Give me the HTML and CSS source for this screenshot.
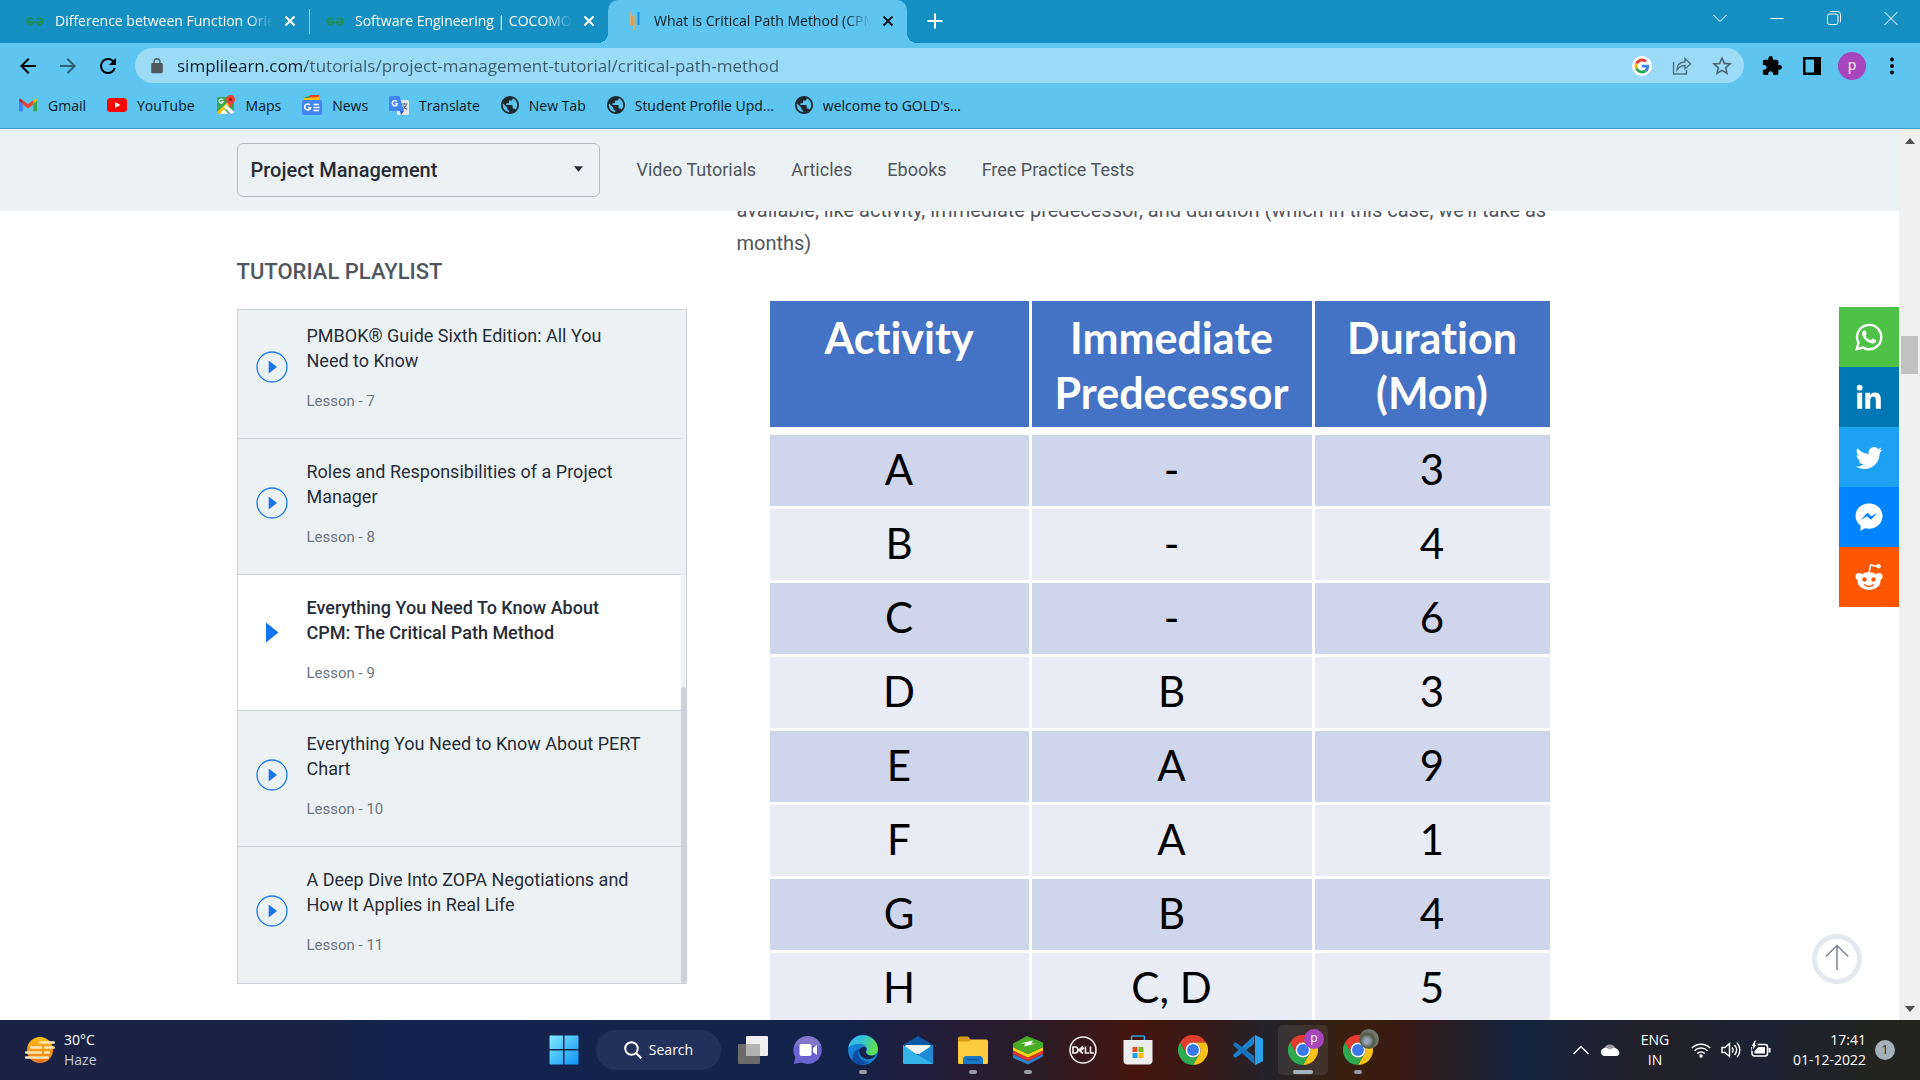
FILE: index.html
```html
<!DOCTYPE html>
<html lang="en">
<head>
<meta charset="utf-8">
<title>What is Critical Path Method (CPM)</title>
<link rel="stylesheet" href="styles.css">
</head>
<body>
<svg class="defs" aria-hidden="true">
  <symbol id="chrome" viewBox="0 0 48 48">
    <path fill="#e33b2e" d="M3.2 12A24 24 0 0 1 44.8 12H24A12 12 0 0 0 13.6 30Z"/>
    <path fill="#fbc116" d="M44.8 12A24 24 0 0 1 24 48L34.4 30A12 12 0 0 0 24 12Z"/>
    <path fill="#2da94f" d="M24 48A24 24 0 0 1 3.2 12L13.6 30A12 12 0 0 0 34.4 30Z"/>
    <circle cx="24" cy="24" r="12" fill="#fff"/><circle cx="24" cy="24" r="9.5" fill="#3b78e7"/>
  </symbol>
  <symbol id="globe" viewBox="2 2 20 20">
    <path fill="#1f2a30" d="M12 2C6.48 2 2 6.48 2 12s4.48 10 10 10 10-4.48 10-10S17.52 2 12 2zm-1 17.93c-3.95-.49-7-3.85-7-7.93 0-.62.08-1.21.21-1.79L9 15v1c0 1.1.9 2 2 2v1.93zm6.9-2.54c-.26-.81-1-1.39-1.9-1.39h-1v-3c0-.55-.45-1-1-1H8v-2h2c.55 0 1-.45 1-1V7h2c1.1 0 2-.9 2-2v-.41c2.93 1.19 5 4.06 5 7.41 0 2.08-.8 3.97-2.1 5.39z"/>
  </symbol>
  <symbol id="play" viewBox="0 0 32 32">
    <circle cx="16" cy="16" r="15" fill="none" stroke="#1b75ec" stroke-width="1.3"/><path fill="#1b75ec" d="M12.700 9.500L21 16L12.700 22.500Z"/>
  </symbol>
  <symbol id="gfg" viewBox="0 0 20 20">
    <path fill="none" stroke="#1f8f5c" stroke-width="2" d="M8 8.500A3.200 3.200 0 1 0 8.600 11H2M12 8.500A3.200 3.200 0 1 1 11.400 11H18"/>
  </symbol>
  <symbol id="close" viewBox="0 0 12 12"><path fill="none" stroke="currentColor" stroke-width="2" d="M1.500 1.500l9 9M10.500 1.500l-9 9"/></symbol>
</svg>

<header class="browser">
  <div class="tabstrip">
    <div class="tab">
      <svg class="i20"><use href="#gfg"/></svg>
      <span class="tab-title">Difference between Function Oriented</span>
      <button class="tab-close" aria-label="Close tab"><svg><use href="#close"/></svg></button>
    </div>
    <div class="tab split">
      <svg class="i20"><use href="#gfg"/></svg>
      <span class="tab-title">Software Engineering | COCOMO Model</span>
      <button class="tab-close" aria-label="Close tab"><svg><use href="#close"/></svg></button>
    </div>
    <div class="tab active">
      <svg class="i20" viewBox="0 0 20 20"><path stroke="#d8b16a" stroke-width="1.500" d="M6.500 1v13M10 4v15" /><path stroke="#c9a45f" stroke-width="1.500" d="M8.300 5v10M11.500 8v6"/><path stroke="#1b94e8" stroke-width="2" d="M14.500 1v13"/></svg>
      <span class="tab-title">What is Critical Path Method (CPM)</span>
      <button class="tab-close" aria-label="Close tab"><svg><use href="#close"/></svg></button>
    </div>
    <button class="newtab" aria-label="New tab"><svg class="i16" viewBox="0 0 16 16"><path stroke="#fff" stroke-width="2" d="M8 .5v15M.5 8h15"/></svg></button>
    <div class="window-controls">
      <button aria-label="Search tabs"><svg class="i16" viewBox="0 0 16 16"><path d="M1.500 5L8 11.500L14.500 5"/></svg></button>
      <button aria-label="Minimize"><svg class="i16" viewBox="0 0 16 16"><path d="M1.500 8.500h13"/></svg></button>
      <button aria-label="Restore"><svg class="i16" viewBox="0 0 16 16"><rect x="1.500" y="4" width="10.500" height="10.500" rx="2"/><path d="M4 1.500h7.500a3 3 0 0 1 3 3V12"/></svg></button>
      <button aria-label="Close"><svg class="i16" viewBox="0 0 16 16"><path d="M1.500 2l13 13M14.500 2l-13 13"/></svg></button>
    </div>
  </div>
  <div class="toolbar">
    <button class="tool" aria-label="Back"><svg class="i24" viewBox="0 0 24 24"><path d="M20 11H7.830l5.590-5.590L12 4l-8 8 8 8 1.410-1.410L7.830 13H20v-2z"/></svg></button>
    <button class="tool dim" aria-label="Forward"><svg class="i24" viewBox="0 0 24 24"><path d="M4 11h12.170l-5.590-5.590L12 4l8 8-8 8-1.410-1.410L16.170 13H4v-2z"/></svg></button>
    <button class="tool" aria-label="Reload"><svg class="i24" viewBox="0 0 24 24"><path d="M17.650 6.350A7.958 7.958 0 0 0 12 4a8 8 0 1 0 7.730 10h-2.080A6 6 0 1 1 12 6c1.660 0 3.140.69 4.220 1.780L13 11h7V4l-2.350 2.350z"/></svg></button>
    <div class="omnibox">
      <svg class="i16" viewBox="1 1 22 22"><path fill="#50585f" d="M18 8h-1V6c0-2.760-2.240-5-5-5S7 3.240 7 6v2H6c-1.100 0-2 .9-2 2v10c0 1.100.9 2 2 2h12c1.100 0 2-.9 2-2V10c0-1.100-.9-2-2-2zM9 6c0-1.660 1.340-3 3-3s3 1.340 3 3v2H9z"/></svg>
      <input class="url" type="text" aria-label="Address" value="simplilearn.com/tutorials/project-management-tutorial/critical-path-method">
      <button class="tool" aria-label="Search with Google"><svg class="i20" viewBox="-8 -8 64 64"><circle cx="24" cy="24" r="32" fill="#fff"/><path fill="#EA4335" d="M24 9.500c3.540 0 6.710 1.220 9.210 3.600l6.850-6.850C35.900 2.380 30.470 0 24 0 14.620 0 6.510 5.380 2.560 13.220l7.980 6.190C12.430 13.720 17.740 9.500 24 9.500z"/><path fill="#4285F4" d="M46.980 24.550c0-1.570-.15-3.090-.38-4.550H24v9.020h12.940c-.58 2.960-2.260 5.480-4.780 7.180l7.730 6c4.510-4.180 7.090-10.360 7.090-17.650z"/><path fill="#FBBC05" d="M10.530 28.590c-.48-1.450-.76-2.990-.76-4.590s.27-3.140.76-4.590l-7.980-6.190C.92 16.460 0 20.120 0 24c0 3.880.92 7.540 2.560 10.780l7.970-6.190z"/><path fill="#34A853" d="M24 48c6.480 0 11.930-2.130 15.890-5.810l-7.730-6c-2.150 1.450-4.920 2.300-8.160 2.300-6.260 0-11.570-4.220-13.470-9.910l-7.980 6.190C6.510 42.620 14.620 48 24 48z"/></svg></button>
      <button class="tool" aria-label="Share"><svg class="i20" viewBox="0 0 20 20"><g fill="none" stroke="#4f7183" stroke-width="1.400"><path d="M1.500 6v12h13v-4"/><path d="M5 14c0-5 3-8 8-8V2.500L18.500 8L13 12.800V9.500c-4 0-6 1.500-8 4.500z"/></g></svg></button>
      <button class="tool" aria-label="Bookmark"><svg class="i20" viewBox="2 2 20 20"><path fill="#4b6573" d="M22 9.240l-7.190-.62L12 2 9.190 8.630 2 9.240l5.460 4.730L5.820 21 12 17.270 18.180 21l-1.630-7.030L22 9.240zM12 15.400l-3.760 2.270 1-4.280-3.320-2.880 4.380-.38L12 6.100l1.710 4.040 4.380.38-3.320 2.880 1 4.280L12 15.400z"/></svg></button>
    </div>
    <div class="actions">
      <button class="tool" aria-label="Extensions"><svg class="i20" viewBox="1 1 22 22"><path d="M20.500 11H19V7c0-1.100-.9-2-2-2h-4V3.500C13 2.120 11.880 1 10.500 1S8 2.120 8 3.500V5H4c-1.100 0-1.990.9-1.990 2v3.800H3.500c1.490 0 2.700 1.210 2.700 2.700s-1.210 2.700-2.700 2.700H2V20c0 1.100.9 2 2 2h3.800v-1.500c0-1.490 1.210-2.700 2.700-2.700 1.490 0 2.700 1.210 2.700 2.700V22H17c1.100 0 2-.9 2-2v-4h1.500c1.380 0 2.500-1.120 2.500-2.500S21.880 11 20.500 11z"/></svg></button>
      <button class="tool" aria-label="Side panel"><svg class="i20" viewBox="0 0 20 20"><path fill-rule="evenodd" d="M1 1h18v18H1zM3.500 3.500v13H12v-13z"/></svg></button>
      <button class="tool avatar" aria-label="Profile">p</button>
      <button class="tool" aria-label="Menu"><svg class="i20" viewBox="0 0 20 20"><circle cx="10" cy="3.500" r="2"/><circle cx="10" cy="10" r="2"/><circle cx="10" cy="16.500" r="2"/></svg></button>
    </div>
  </div>
  <nav class="bookmarks" aria-label="Bookmarks">
    <a href="#"><svg class="i20" viewBox="0 0 20 20"><path fill="#4285f4" d="M1 5v11.500h3.800V8z"/><path fill="#34a853" d="M19 5v11.500h-3.800V8z"/><path fill="#fbbc04" d="M15.200 5.500L17 4c1-.6 2 0 2 1.500L15.200 9z"/><path fill="#c5221f" d="M4.800 5.500L3 4C2 3.400 1 4 1 5.500L4.800 9z"/><path fill="#ea4335" d="M4.800 5.300L10 9.300l5.200-4V9.500L10 13.500L4.800 9.500z"/></svg>Gmail</a>
    <a href="#"><svg class="i20" viewBox="0 0 20 20"><rect y="3" width="20" height="14" rx="3.500" fill="#f00"/><path fill="#fff" d="M8 7l5.500 3L8 13z"/></svg>YouTube</a>
    <a href="#"><svg class="i20" viewBox="0 0 20 20"><rect x="1" y="2" width="17" height="17" rx="2" fill="#34a853"/><path fill="#4285f4" d="M11 11l7 5.500V17a2 2 0 0 1-2 2h-3z"/><path fill="#fbbc04" d="M1 17L16 3l2 2.500L4 19H3a2 2 0 0 1-2-2z"/><path fill="#fff" d="M10 9.500l8 7V18L15 19 8 12zM4 19l4-5 5 5z"/><path fill="#e94335" d="M14.500 0a4.500 4.500 0 0 0-4.500 4.500c0 3 3.500 4.500 4.500 8.500 1-4 4.500-5.500 4.500-8.500A4.500 4.500 0 0 0 14.500 0z"/><circle cx="14.500" cy="4.500" r="1.600" fill="#861b14"/><path fill="none" stroke="#fff" stroke-width="1.200" d="M6.800 4.800a2 2 0 1 0 .4 1.700H5.500"/></svg>Maps</a>
    <a href="#"><svg class="i20" viewBox="0 0 20 20"><path fill="#0c9d58" d="M3 2l9-2 1 5H3z"/><path fill="#ea4335" d="M8 0h9v5H7z"/><path fill="#fbbc04" d="M2 3l15-1v4H2z"/><rect y="5" width="20" height="15" rx="1.500" fill="#4285f4"/><path fill="none" stroke="#fff" stroke-width="1.600" d="M8 10a3 3 0 1 0 .6 2.800H6M11.500 9.500H17M11.500 12.500h6M11.500 15.500H17"/></svg>News</a>
    <a href="#"><svg class="i20" viewBox="0 0 20 20"><rect x="8" y="5" width="12" height="15" rx="1.500" fill="#e3e8ee"/><path fill="#4285f4" d="M1.500 1h9L15 16H1.500A1.500 1.500 0 0 1 0 14.500v-12A1.500 1.500 0 0 1 1.500 1z"/><path fill="#3058a8" d="M11 16h4l-3 4z"/><path fill="none" stroke="#fff" stroke-width="1.400" d="M7.800 6.500a2.600 2.600 0 1 0 .6 2.200H6"/><path fill="none" stroke="#5c6b7a" stroke-width="1.100" d="M13 9h5.500M15.700 8v1M17.500 9c-.5 3-2 4-3 5M14.500 10.500c.7 2 2.500 3.500 3.500 4"/></svg>Translate</a>
    <a href="#"><svg class="i18"><use href="#globe"/></svg>New Tab</a>
    <a href="#"><svg class="i18"><use href="#globe"/></svg>Student Profile Upd...</a>
    <a href="#"><svg class="i18"><use href="#globe"/></svg>welcome to GOLD's...</a>
  </nav>
</header>

<div class="viewport">
  <div class="site">
    <header class="site-nav">
      <div class="container nav-row">
        <div class="topic">
          <select aria-label="Topic"><option>Project Management</option></select>
          <svg class="caret" viewBox="0 0 8 5"><path fill="#272c37" d="M0 0h8L4 5z"/></svg>
        </div>
        <nav class="links"><a href="#">Video Tutorials</a><a href="#">Articles</a><a href="#">Ebooks</a><a href="#">Free Practice Tests</a></nav>
      </div>
    </header>
    <main class="content">
      <div class="container columns">
        <aside class="playlist">
          <h2>TUTORIAL PLAYLIST</h2>
          <div class="scroller">
            <ul>
              <li><svg class="play"><use href="#play"/></svg><a href="#">PMBOK® Guide Sixth Edition: All You Need to Know</a><small>Lesson - 7</small></li>
              <li><svg class="play"><use href="#play"/></svg><a href="#">Roles and Responsibilities of a Project Manager</a><small>Lesson - 8</small></li>
              <li class="current"><svg class="play" viewBox="0 0 32 32"><path fill="#1274f0" d="M10 6.500L22.500 16.500L10 26.500Z"/></svg><a href="#">Everything You Need To Know About CPM: The Critical Path Method</a><small>Lesson - 9</small></li>
              <li><svg class="play"><use href="#play"/></svg><a href="#">Everything You Need to Know About PERT Chart</a><small>Lesson - 10</small></li>
              <li><svg class="play"><use href="#play"/></svg><a href="#">A Deep Dive Into ZOPA Negotiations and How It Applies in Real Life</a><small>Lesson - 11</small></li>
            </ul>
            <div class="track"><div class="thumb"></div></div>
          </div>
        </aside>
        <article>
          <p>available, like activity, immediate predecessor, and duration (which in this case, we'll take as months)</p>
          <table>
            <colgroup><col class="c-act"><col class="c-pre"><col class="c-dur"></colgroup>
            <thead><tr><th>Activity</th><th>Immediate Predecessor</th><th>Duration (Mon)</th></tr></thead>
            <tbody>
              <tr><td>A</td><td>-</td><td>3</td></tr>
              <tr><td>B</td><td>-</td><td>4</td></tr>
              <tr><td>C</td><td>-</td><td>6</td></tr>
              <tr><td>D</td><td>B</td><td>3</td></tr>
              <tr><td>E</td><td>A</td><td>9</td></tr>
              <tr><td>F</td><td>A</td><td>1</td></tr>
              <tr><td>G</td><td>B</td><td>4</td></tr>
              <tr><td>H</td><td>C, D</td><td>5</td></tr>
            </tbody>
          </table>
        </article>
      </div>
    </main>
    <div class="share">
      <a class="wa" href="#" aria-label="WhatsApp"><svg class="i28" viewBox="0 0 24 24"><path fill="none" stroke="#fff" stroke-width="2" d="M1.500 22.500L3 17A10.400 10.400 0 1 1 7 21.100Z"/><path d="M17.472 14.382c-.297-.149-1.758-.867-2.030-.967-.273-.099-.471-.148-.67.15-.197.297-.767.966-.94 1.164-.173.199-.347.223-.644.075-.297-.15-1.255-.463-2.390-1.475-.883-.788-1.480-1.761-1.653-2.059-.173-.297-.018-.458.13-.606.134-.133.298-.347.446-.52.149-.174.198-.298.298-.497.099-.198.05-.371-.025-.52-.075-.149-.669-1.612-.916-2.207-.242-.579-.487-.5-.669-.51-.173-.008-.371-.01-.57-.01-.198 0-.52.074-.792.372-.272.297-1.040 1.016-1.040 2.479 0 1.462 1.065 2.875 1.213 3.074.149.198 2.096 3.200 5.077 4.487.709.306 1.262.489 1.694.625.712.227 1.360.195 1.871.118.571-.085 1.758-.719 2.006-1.413.248-.694.248-1.289.173-1.413-.074-.124-.272-.198-.57-.347"/></svg></a>
      <a class="li" href="#" aria-label="LinkedIn"><svg class="i28" viewBox="2 2 20 20"><path d="M20.447 20.452h-3.554v-5.569c0-1.328-.027-3.037-1.852-3.037-1.853 0-2.136 1.445-2.136 2.939v5.667H9.351V9h3.414v1.561h.046c.477-.9 1.637-1.850 3.370-1.850 3.601 0 4.267 2.370 4.267 5.455v6.286zM5.337 7.433a2.062 2.062 0 1 1 0-4.125 2.062 2.062 0 0 1 0 4.125zM7.119 20.452H3.554V9h3.565v11.452z"/></svg></a>
      <a class="tw" href="#" aria-label="Twitter"><svg class="i28" viewBox="-.5 -1.500 25 25"><path d="M23.953 4.570a10 10 0 01-2.825.775 4.958 4.958 0 002.163-2.723c-.951.555-2.005.959-3.127 1.184a4.920 4.920 0 00-8.384 4.482C7.690 8.095 4.067 6.130 1.640 3.162a4.822 4.822 0 00-.666 2.475c0 1.710.87 3.213 2.188 4.096a4.904 4.904 0 01-2.228-.616v.06a4.923 4.923 0 003.946 4.827 4.996 4.996 0 01-2.212.085 4.936 4.936 0 004.604 3.417 9.867 9.867 0 01-6.102 2.105c-.39 0-.779-.023-1.170-.067a13.995 13.995 0 007.557 2.209c9.053 0 13.998-7.496 13.998-13.985 0-.21 0-.42-.015-.63A9.935 9.935 0 0024 4.590z"/></svg></a>
      <a class="ms" href="#" aria-label="Messenger"><svg class="i28" viewBox="0 0 28 28"><path d="M14 .5C6.300.5.500 6 .500 13c0 4 2 7.300 5 9.500V28l4.500-2.700c1.300.3 2.600.5 4 .5 7.700 0 13.500-5.500 13.500-12.700S21.700.5 14 .5z"/><path fill="#0084ff" d="M5.800 16.800L12.300 9.800L16.300 13.300L22.500 9.800L16 16.800L12 13.300z"/></svg></a>
      <a class="rd" href="#" aria-label="Reddit"><svg class="i28" viewBox="0 0 28 28"><path fill="none" stroke="#fff" stroke-width="1.500" d="M14 10l1.600-8 7 1.500"/><circle cx="23.500" cy="3.300" r="2.300"/><circle cx="4" cy="13.500" r="3.500"/><circle cx="24" cy="13.500" r="3.500"/><ellipse cx="14" cy="18" rx="11.500" ry="9"/><circle cx="9.500" cy="16.500" r="2.200" fill="#ff5700"/><circle cx="18.500" cy="16.500" r="2.200" fill="#ff5700"/><path fill="none" stroke="#ff5700" stroke-width="1.400" d="M9 21.500c3 2.300 7 2.300 10 0"/></svg></a>
    </div>
    <button class="totop" aria-label="Back to top"><svg viewBox="0 0 24 26"><path fill="none" stroke="#7d8299" stroke-width="1.500" d="M12 26V1.500M.8 12.500L12 1.500l11.200 11"/></svg></button>
  </div>
  <div class="scrollbar">
    <svg viewBox="0 0 10 6"><path fill="#505050" d="M0 6h10L5 0z"/></svg>
    <div class="handle"></div>
    <svg viewBox="0 0 10 6"><path fill="#505050" d="M0 0h10L5 6z"/></svg>
  </div>
</div>

<footer class="taskbar">
  <button class="weather">
    <svg class="i30" viewBox="0 0 30 30"><defs><linearGradient id="sun" x1="0" y1="0" x2="0" y2="1"><stop offset="0" stop-color="#fbbd12"/><stop offset="1" stop-color="#e8761b"/></linearGradient></defs><circle cx="15" cy="15" r="13" fill="url(#sun)"/><path stroke="#fde6b4" stroke-width="2.400" stroke-linecap="round" d="M15 7.500h14M6 12.500h10M20 12.500h9M1 17.500h15M20 17.500h4M1 22.500h22"/></svg>
    <span>30°C<br><span class="muted">Haze</span></span>
  </button>
  <div class="apps">
    <button class="app" aria-label="Start"><svg class="i30" viewBox="0 0 30 30"><defs><linearGradient id="win" x1="0" y1="0" x2="1" y2="1"><stop offset="0" stop-color="#7fe9fd"/><stop offset="1" stop-color="#0f93f5"/></linearGradient></defs><path fill="url(#win)" d="M1.500.5H14V14H.5V1.500a1 1 0 0 1 1-1zM15.500.5h13a1 1 0 0 1 1 1V14h-14zM.5 15.500H14v14H1.500a1 1 0 0 1-1-1zM15.500 15.500h14v13a1 1 0 0 1-1 1h-13z"/></svg></button>
    <button class="search"><svg class="i18" viewBox="0 0 18 18"><circle cx="7.500" cy="7.500" r="6.300" fill="none" stroke="#fff" stroke-width="2"/><path stroke="#fff" stroke-width="2" d="M12 12l5.300 5.300"/></svg>Search</button>
    <button class="app" aria-label="Task view"><svg class="i30" viewBox="0 0 30 30"><rect y="9" width="22" height="20" rx="1" fill="#6c6a6b"/><rect x="8" y="1" width="22" height="20" rx="1" fill="#eeeeef"/><path fill="#b4b3b4" d="M8 9h14v12H8z"/></svg></button>
    <button class="app" aria-label="Chat"><svg class="i30" viewBox="0 0 30 30"><path fill="#6a63cf" d="M15 1a14 14 0 1 1-6.500 26.500L.8 29l1.500-7A14 14 0 0 1 15 1z"/><path fill="#8d7fc6" d="M15 1a14 14 0 0 1 13.500 10H1.700A14 14 0 0 1 15 1z" opacity=".7"/><rect x="6.500" y="9" width="12" height="12" rx="2" fill="#fff"/><path fill="#fff" d="M20 13l4-3v10l-4-3z"/></svg></button>
    <button class="app running" aria-label="Edge"><svg class="i30" viewBox="0 0 30 30"><defs><linearGradient id="edg" x1="0" y1="0" x2="1" y2=".3"><stop offset="0" stop-color="#35b8e8"/><stop offset=".5" stop-color="#35c1d6"/><stop offset="1" stop-color="#5fe052"/></linearGradient></defs><circle cx="15" cy="15" r="15" fill="#1580d4"/><path fill="url(#edg)" d="M.2 13A15 15 0 0 1 30 14c0 4-3 6.500-6.500 6.500s-5.500-1.500-5.500-3 1-1.500 1-3.500c0-3-3.500-5-7.500-5C6 9 2 10.500.2 13z"/><path fill="#0c4da2" d="M11 14c-3 6 2 14 11 12.500-5 4-13 4.500-17-.5-1.500-5 1-10.500 6-12z"/><path fill="#14244c" d="M18 17.500c-1-1 1-2 .5-4-2-3-7-1-7.500 2-.5 5 5 9.500 11 8.500 3-.8 5-2.500 6-4.500-3 2-8 1.500-10-2z"/></svg></button>
    <button class="app" aria-label="Mail"><svg class="i30" viewBox="0 0 30 30"><path fill="#0c59a8" d="M0 10L15 1l15 9v5H0z"/><path fill="#f2f4f6" d="M2.500 10h25v9h-25z"/><path fill="#33b3e8" d="M0 10l15 10 15-10v18a1 1 0 0 1-1 1H1a1 1 0 0 1-1-1z"/><path fill="#1c8ad6" d="M30 29L15 20 30 10z"/></svg></button>
    <button class="app running" aria-label="File Explorer"><svg class="i30" viewBox="0 0 30 30"><path fill="#d79a12" d="M0 3a1.500 1.500 0 0 1 1.500-1.500H10L13 5v5H0z"/><path fill="#fdcb3d" d="M0 6.500h10L13 4.500h15.500A1.500 1.500 0 0 1 30 6v22a1 1 0 0 1-1 1H1a1 1 0 0 1-1-1z"/><path fill="#1879c4" d="M5 29v-4.500A3.500 3.500 0 0 1 8.500 21h13a3.500 3.500 0 0 1 3.500 3.500V29z"/><path stroke="#0d569b" stroke-width="1.500" d="M9 24.500h12"/></svg></button>
    <button class="app running" aria-label="BlueStacks"><svg class="i30" viewBox="0 0 30 30"><path fill="#2782c8" d="M0 19l15 7 15-7v2.500L15 29.500 0 23z"/><path fill="#e43131" d="M0 15.500l15 7 15-7V19l-15 7L0 19z"/><path fill="#fbd416" d="M0 12l15 7 15-7v3.500l-15 7-15-7z"/><path fill="#48ad26" d="M0 8.500L14 1l16 6.500V12l-15 7L0 12z"/><path fill="#fff" d="M7 8.500l13-3-2 3h5L11 11.500l1.500-3z"/></svg></button>
    <button class="app" aria-label="Dell"><svg class="i30" viewBox="0 0 30 30"><circle cx="15" cy="15" r="13" fill="none" stroke="#f1eceb" stroke-width="1.600"/><path fill="none" stroke="#f1eceb" stroke-width="1.700" d="M5 12h2a3 3 0 0 1 0 6H5zM15 11.500l-4 3.500 4 3.500M11.500 16l4.500-3M17.500 11.500V18H21M22.500 11.500V18h3.500"/></svg></button>
    <button class="app" aria-label="Microsoft Store"><svg class="i30" viewBox="0 0 30 30"><path fill="none" stroke="#31a5de" stroke-width="1.600" d="M8.500 7V2a1 1 0 0 1 1-1h11a1 1 0 0 1 1 1v5"/><path fill="#eceded" d="M.5 5h29v20.500a4 4 0 0 1-4 4h-21a4 4 0 0 1-4-4z"/><path fill="#e8502a" d="M9.500 12h5v5h-5z"/><path fill="#78b51b" d="M15.500 12h5v5h-5z"/><path fill="#1a9fe8" d="M9.500 18h5v5h-5z"/><path fill="#fbb813" d="M15.500 18h5v5h-5z"/></svg></button>
    <button class="app" aria-label="Chrome"><svg class="i30"><use href="#chrome"/></svg></button>
    <button class="app" aria-label="Visual Studio Code"><svg class="i30" viewBox="0 0 30 30"><path fill="#1c82cf" d="M21 9L3 22.500a1.500 1.500 0 0 1-1.500 0L.5 21a1.200 1.200 0 0 1 0-1.600L21.500.3z"/><path fill="#1673bd" d="M21 21L3 7.500a1.500 1.500 0 0 0-1.500 0L.5 9a1.200 1.200 0 0 0 0 1.600l21 19z"/><path fill="#2c9fea" d="M22 0l7 3.300a1.500 1.500 0 0 1 1 1.500v20.400a1.500 1.500 0 0 1-1 1.500L22 30z"/></svg></button>
    <button class="app running focused" aria-label="Chrome, profile p"><svg class="i30"><use href="#chrome"/></svg><span class="badge">p</span></button>
    <button class="app running" aria-label="Chrome, second profile"><svg class="i30"><use href="#chrome"/></svg><span class="badge photo"></span></button>
  </div>
  <div class="tray">
    <button aria-label="Hidden icons"><svg class="i16" viewBox="0 0 16 16"><path fill="none" stroke="#fff" stroke-width="1.500" d="M.5 12L8 4.500l7.500 7.500"/></svg></button>
    <button aria-label="OneDrive"><svg class="i20" viewBox="0 0 20 20"><path fill="#9b9ba0" d="M4 9a6 6 0 0 1 11-1.500L17 12l-13 1z"/><path fill="#fff" d="M4 16a4 4 0 0 1-1-7.500c3-1 5 0 7 1 3-2 6-2 8 .5 2 2 2 5.500-1.500 6z"/></svg></button>
    <button class="lang">ENG<br>IN</button>
    <button class="status" aria-label="Network, volume and battery">
      <svg class="i20" viewBox="0 0 20 20"><g fill="none" stroke="#fff" stroke-width="1.500"><path d="M.8 8a13 13 0 0 1 18.400 0M3.500 10.800a9.200 9.200 0 0 1 13 0M6.200 13.500a5.400 5.400 0 0 1 7.600 0"/></g><circle cx="10" cy="16" r="1.700" fill="#fff"/></svg>
      <svg class="i20" viewBox="0 0 20 20"><g fill="none" stroke="#fff" stroke-width="1.400"><path d="M1 7.500h3L8.500 3.500v13L4 12.500H1zM11 7.500a3.500 3.500 0 0 1 0 5M13.500 5a7 7 0 0 1 0 10M16 2.800a10.500 10.500 0 0 1 0 14.400"/></g></svg>
      <svg class="i20" viewBox="0 0 20 20"><rect x="1" y="4.500" width="15.500" height="11.500" rx="2.500" fill="none" stroke="#fff" stroke-width="1.500"/><path fill="#fff" d="M7.500 7H14v6.500H3.500V11zM17.500 8h2v4.500h-2z"/><path fill="#fff" stroke="#20222c" d="M3.500 0L0 6.500h2L1 11l5.500-6.500H4.200L5.500 0z"/></svg>
    </button>
    <button class="clock">17:41<br>01-12-2022</button>
    <span class="count">1</span>
  </div>
</footer>
</body>
</html>
```
FILE: styles.css
```css
* { box-sizing: border-box; }

body {
  margin: 0;
  height: 100vh;
  display: flex;
  flex-direction: column;
  overflow: hidden;
  background: #fff;
  font-family: "Open Sans", "Noto Sans", sans-serif;
  font-size: 14px;
}

button {
  display: flex;
  align-items: center;
  justify-content: center;
  padding: 0;
  border: 0;
  background: none;
  color: inherit;
  font: inherit;
}

a { color: inherit; text-decoration: none; }
svg { flex: none; display: block; }

.defs { position: absolute; width: 0; height: 0; }
.i16 { width: 16px; height: 16px; }
.i18 { width: 18px; height: 18px; }
.i20 { width: 20px; height: 20px; }
.i24 { width: 24px; height: 24px; }
.i28 { width: 28px; height: 28px; }
.i30 { width: 30px; height: 30px; }

/* Browser frame */
.browser {
  flex: none;
  background: #5ec5f0;
  border-bottom: 1px solid #4c9cc0;
}

.tabstrip {
  display: flex;
  height: 43px;
  padding-left: 9px;
  background: #168fc3;
  color: #fff;
}

.tab {
  position: relative;
  display: flex;
  align-items: center;
  gap: 10px;
  width: 300px;
  height: 43px;
  padding: 0 12px 2px 16px;
}

.tab + .tab { width: 299px; }

.split::before {
  content: "";
  position: absolute;
  left: 0;
  top: 9px;
  width: 1px;
  height: 25px;
  background: #8fd0ee;
}

.tab.active {
  border-radius: 10px 10px 0 0;
  background: #5ec5f0;
  color: #0a1a22;
}

.tab.active::before,
.tab.active::after {
  content: "";
  position: absolute;
  bottom: 0;
  width: 10px;
  height: 10px;
}

.tab.active::before {
  left: -10px;
  background: radial-gradient(circle at 0 0, transparent 10px, #5ec5f0 10px);
}

.tab.active::after {
  right: -10px;
  background: radial-gradient(circle at 100% 0, transparent 10px, #5ec5f0 10px);
}

.tab-title {
  flex: 1;
  overflow: hidden;
  white-space: nowrap;
  -webkit-mask-image: linear-gradient(90deg, #000 88%, transparent);
  mask-image: linear-gradient(90deg, #000 88%, transparent);
}

.tab-close { width: 14px; height: 14px; }
.tab-close svg { width: 12px; height: 12px; }
.newtab { width: 56px; padding-bottom: 2px; }

.window-controls {
  display: flex;
  margin-left: auto;
  padding: 0 1px 7px 0;
}

.window-controls button { width: 57px; }
.window-controls path,
.window-controls rect { fill: none; stroke: #fff; stroke-width: 1; }

.toolbar {
  display: flex;
  align-items: center;
  height: 45px;
  padding: 0 8px;
}

.tool { width: 40px; height: 36px; }
.dim { opacity: 0.5; }

.omnibox {
  flex: 1;
  display: flex;
  align-items: center;
  height: 35px;
  margin-left: 7px;
  padding: 0 2px 0 14px;
  border-radius: 18px;
  background: #9cdbf6;
}

.url {
  flex: 1;
  min-width: 0;
  margin-left: 12px;
  padding: 0;
  border: 0;
  outline: 0;
  background: linear-gradient(90deg, #0a1c26 128px, #38596a 128px);
  -webkit-background-clip: text;
  background-clip: text;
  color: transparent;
  font: 17px "Open Sans", "Noto Sans", sans-serif;
}

.actions { display: flex; align-items: center; margin-left: 8px; }

.avatar {
  width: 28px;
  height: 28px;
  margin: 0 6px;
  padding-bottom: 2px;
  border-radius: 50%;
  background: #a745bd;
  color: #fff;
}

.bookmarks {
  display: flex;
  align-items: center;
  gap: 21px;
  height: 40px;
  padding: 0 18px 6px;
  color: #07161e;
}

.bookmarks a { display: flex; align-items: center; gap: 10px; white-space: nowrap; }

/* Web page */
.viewport { flex: 1; min-height: 0; display: flex; }

.site {
  position: relative;
  flex: 1;
  display: flex;
  flex-direction: column;
  min-width: 0;
  overflow: hidden;
  color: #51565e;
  font-family: Roboto, sans-serif;
}

.container { width: 100%; max-width: 1426px; margin: 0 auto; }

.site-nav {
  flex: none;
  padding: 14px 0;
  background: linear-gradient(#e6f3fb, #ecf2f4 8px);
}

.nav-row { display: flex; align-items: center; gap: 37px; }
.topic { position: relative; width: 363px; }

.topic select {
  display: block;
  width: 100%;
  height: 54px;
  padding: 0 13px;
  border: 1px solid #b5bac1;
  border-radius: 6px;
  appearance: none;
  background: transparent;
  color: #272c37;
  font: 500 20px Roboto, sans-serif;
}

.caret { position: absolute; right: 17px; top: 23px; width: 9px; height: 6px; }
.links { display: flex; gap: 35px; font-size: 18px; line-height: 24px; }

.content { flex: 1; min-height: 0; overflow: hidden; }
.columns { display: flex; gap: 50px; }
.playlist { flex: none; width: 450px; }

.playlist h2 {
  margin: 46px 0 22px;
  font-size: 22px;
  font-weight: 500;
  line-height: 30px;
}

.scroller {
  display: flex;
  height: 675px;
  overflow: hidden;
  border: 1px solid #cbd1d8;
  background: #ecf2f4;
}

.scroller ul {
  flex: 1;
  display: flex;
  flex-direction: column;
  justify-content: flex-end;
  margin: 0;
  padding: 0;
  list-style: none;
}

.scroller li {
  display: grid;
  grid-template-columns: 32px 1fr;
  align-content: start;
  column-gap: 19px;
  flex: none;
  height: 136px;
  padding: 20px 36px 0 18px;
  border-bottom: 1px solid #cbd1d8;
}

.scroller li:last-child { border-bottom: 0; }
.scroller .current { background: #fff; }
.play { grid-row: 1 / 3; width: 32px; height: 32px; margin-top: 28px; }
.current .play { margin-top: 21px; }

.scroller li a {
  height: 68px;
  color: #272c37;
  font-size: 18px;
  line-height: 25px;
}

.scroller .current a { font-weight: 500; }
.scroller small { color: #6c757d; font-size: 15px; line-height: 20px; }

.track { display: flex; align-items: flex-end; width: 5px; }
.thumb { width: 5px; height: 44%; border-radius: 3px; background: #cdd3dc; }

article { flex: 1; max-width: 816px; }

article p {
  margin: -17px 0 41px;
  font-size: 20px;
  line-height: 33px;
}

table {
  width: 780px;
  margin-left: 33px;
  border-spacing: 0;
  table-layout: fixed;
  color: #000;
  font-family: Lato, sans-serif;
  font-variant-ligatures: none;
  text-align: center;
}

.c-act { width: 259px; }
.c-pre { width: 283px; }

th {
  height: 126px;
  padding: 9px 10px 0;
  background: #4472c4;
  color: #fff;
  font-size: 43px;
  font-weight: 700;
  line-height: 55px;
  vertical-align: top;
}

th + th, td + td { border-left: 3px solid #fff; }

td {
  height: 74px;
  padding: 0 0 3px;
  border-bottom: 3px solid #fff;
  background: #e9ebf5;
  font-size: 42px;
  line-height: 50px;
}

tbody tr:first-child td { height: 82px; border-top: 8px solid #fff; }
tbody tr:nth-child(odd) td { background: #cfd5ea; }

.share { position: absolute; right: 0; top: 178px; width: 60px; }
.share a { display: flex; align-items: center; justify-content: center; height: 60px; fill: #fff; }
.wa { background: #4dc247; }
.li { background: #0077b5; }
.tw { background: #1da1f2; }
.ms { background: #0084ff; }
.rd { background: #ff5700; }

.totop {
  position: absolute;
  right: 37px;
  bottom: 36px;
  width: 50px;
  height: 50px;
  border: 5px solid #e3e9ee;
  border-radius: 50%;
  background: #fff;
}

.totop svg { width: 24px; height: 26px; margin-bottom: 5px; }

.scrollbar {
  flex: none;
  display: flex;
  flex-direction: column;
  align-items: center;
  justify-content: space-between;
  width: 21px;
  padding: 9px 0 8px;
  background: #f0f0f0;
}

.scrollbar svg { width: 10px; height: 6px; }
.handle { width: 17px; height: 38px; margin-bottom: auto; margin-top: 192px; background: #c1c1c1; }

/* Windows taskbar */
.taskbar {
  flex: none;
  display: grid;
  grid-template-columns: 1fr auto 1fr;
  align-items: center;
  height: 60px;
  background: linear-gradient(90deg, #1a2345 0, #1a2345 16%, #14234e 21%, #14234a 44%, #251c35 50%, #2a1b26 54%, #45160f 59%, #3a1814 62%, #24232a 66%, #38200f 70%, #391a14 73%, #252029 76%, #14243e 79%, #222029 86%, #1a2233 92%, #23241f 98%);
  color: #fff;
  line-height: 20px;
}

.weather { justify-self: start; gap: 9px; padding-left: 25px; text-align: left; }
.muted { color: #c3c8d6; }
.apps { display: flex; align-items: center; gap: 5px; padding-left: 2px; }

.app {
  position: relative;
  width: 50px;
  height: 50px;
  border-radius: 5px;
}

.focused { background: #ffffff14; }

.running::after {
  content: "";
  position: absolute;
  left: 21px;
  bottom: 1px;
  width: 8px;
  height: 4px;
  border-radius: 2px;
  background: #9a9aa6;
}

.focused::after { left: 15px; width: 20px; background: #a3b3bd; }

.search {
  gap: 7px;
  width: 125px;
  height: 40px;
  margin: 0 2px;
  border-radius: 20px;
  background: #22315a;
}

.badge {
  position: absolute;
  left: 26px;
  top: 4px;
  width: 20px;
  height: 20px;
  border-radius: 50%;
  background: #a745bd;
  font-size: 12px;
  line-height: 17px;
}

.photo { background: radial-gradient(circle at 40% 60%, #9aa3b5 15%, #4f5a45 40%, #77796f 60%, #5a5f55); }

.tray { display: flex; align-items: center; justify-self: end; padding-right: 25px; }
.tray > button { margin-right: 11px; }
.lang { width: 48px; }
.status { gap: 10px; margin-left: 1px; }
.tray .clock { justify-content: flex-end; width: 84px; margin-right: 9px; text-align: right; white-space: nowrap; }

.count {
  width: 20px;
  height: 20px;
  border-radius: 50%;
  background: #a3b1b8;
  color: #1c2630;
  font-size: 12px;
  text-align: center;
}
```
